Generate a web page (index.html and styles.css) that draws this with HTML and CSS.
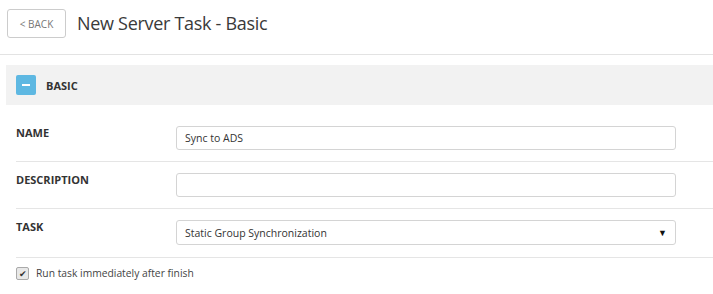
FILE: index.html
```html
<!DOCTYPE html>
<html lang="en">
<head>
  <meta charset="UTF-8">
  <title>New Server Task - Basic</title>
  <link rel="stylesheet" href="styles.css">
</head>
<body>
  <div class="page-header">
    <button class="back-btn">&lt; BACK</button>
    <h1>New Server Task - Basic</h1>
  </div>

  <div class="section">
    <span class="collapse-icon"></span>
    <span class="section-title">BASIC</span>
  </div>

  <div class="form">
    <div class="row first">
      <label class="label">NAME</label>
      <input class="field" type="text" value="Sync to ADS">
    </div>
    <div class="row">
      <label class="label">DESCRIPTION</label>
      <input class="field" type="text" value="">
    </div>
    <div class="row task">
      <label class="label">TASK</label>
      <div class="field select">
        <span>Static Group Synchronization</span>
        <span class="caret">&#9660;</span>
      </div>
    </div>
    <div class="check-row">
      <span class="checkbox">&#10004;</span>
      <span>Run task immediately after finish</span>
    </div>
  </div>
</body>
</html>
```

FILE: styles.css
```css
body {
  margin: 0;
  font-family: "Open Sans", sans-serif;
  color: #333;
  background: #fff;
}
.page-header {
  display: flex;
  align-items: flex-start;
  gap: 11px;
  padding: 9px 7px 0;
  height: 55px;
  box-sizing: border-box;
  border-bottom: 1px solid #e3e3e3;
}
.back-btn {
  width: 59px;
  height: 29px;
  padding: 0;
  font-family: inherit;
  font-size: 10px;
  color: #777;
  background: #fff;
  border: 1px solid #ccc;
  border-radius: 3px;
}
h1 {
  margin: 0;
  font-size: 18px;
  font-weight: normal;
  line-height: 29px;
  color: #3a3a3a;
  letter-spacing: -0.3px;
}
.section {
  display: flex;
  align-items: center;
  gap: 10px;
  margin: 10px 0 0 6px;
  padding-left: 10px;
  height: 40px;
  background: #f2f2f2;
}
.collapse-icon {
  width: 20px;
  height: 20px;
  border-radius: 2px;
  background: #5eb8e2;
  position: relative;
}
.collapse-icon::after {
  content: "";
  position: absolute;
  left: 6px;
  top: 9px;
  width: 8px;
  height: 2px;
  background: #fff;
}
.section-title {
  font-size: 11px;
  font-weight: bold;
  color: #333;
}
.form {
  padding-left: 16px;
}
.row {
  display: flex;
  align-items: flex-start;
  padding: 11px 0;
  border-bottom: 1px solid #e5e5e5;
}
.row.first {
  padding-top: 21px;
}
.row.task {
  padding: 11px 0 12px;
}
.label {
  width: 160px;
  font-size: 11px;
  font-weight: bold;
  line-height: 14px;
  color: #333;
}
.field {
  width: 500px;
  height: 24px;
  box-sizing: border-box;
  border: 1px solid #d4d4d4;
  border-radius: 3px;
  padding: 0 8px;
  font-family: inherit;
  font-size: 10.5px;
  color: #333;
  background: #fff;
}
.select {
  display: flex;
  align-items: center;
  justify-content: space-between;
  height: 25px;
}
.caret {
  font-size: 9px;
  color: #111;
}
.check-row {
  display: flex;
  align-items: center;
  gap: 7px;
  padding-top: 8px;
  font-size: 10.3px;
  color: #444;
}
.checkbox {
  width: 11px;
  height: 11px;
  border: 1px solid #aaa;
  border-radius: 2px;
  background: #e8e8e8;
  font-size: 9px;
  line-height: 11px;
  text-align: center;
  color: #333;
}
```
